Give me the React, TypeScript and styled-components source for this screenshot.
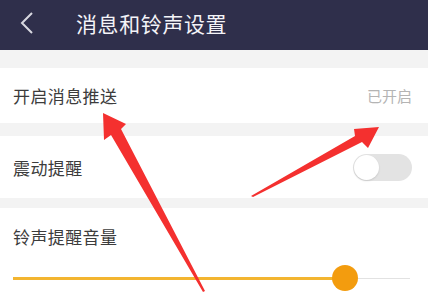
import React from 'react';
import styled, { createGlobalStyle } from 'styled-components';

const GlobalStyle = createGlobalStyle`
    html, body {
        margin: 0;
        padding: 0;
        background: #ffffff;
        font-family: "Noto Sans CJK SC", "Noto Sans", sans-serif;
    }
`;

const Page = styled.div`
    position: relative;
    width: 428px;
    height: 300px;
    overflow: hidden;
    background: #f3f3f3;
    display: flex;
    flex-direction: column;
`;

const Header = styled.div`
    height: 50px;
    flex: 0 0 50px;
    background: #2f2f4b;
    display: flex;
    align-items: center;
    padding: 0 0 4px 20px;
    box-sizing: border-box;
`;

const BackButton = styled.div`
    width: 16px;
    height: 24px;
    display: flex;
    align-items: center;
`;

const Title = styled.div`
    margin-left: 40px;
    color: #f4f4f8;
    font-size: 21px;
    letter-spacing: 0.6px;
`;

const Gap = styled.div<{ $h: number }>`
    flex: 0 0 ${(p) => p.$h}px;
`;

const Row = styled.div<{ $h: number }>`
    flex: 0 0 ${(p) => p.$h}px;
    background: #ffffff;
    display: flex;
    align-items: center;
    justify-content: space-between;
    padding: 0 16px 0 13px;
    box-sizing: border-box;
`;

const Label = styled.div`
    color: #3c3c3c;
    font-size: 17px;
    letter-spacing: 0.4px;
`;

const Status = styled.div`
    color: #b4b4b4;
    font-size: 15px;
`;

const Toggle = styled.div`
    width: 59px;
    height: 27px;
    border-radius: 14px;
    background: #e3e3e3;
    display: flex;
    align-items: center;
    padding: 1px;
    box-sizing: border-box;
`;

const Knob = styled.div`
    width: 25px;
    height: 25px;
    border-radius: 50%;
    background: #ffffff;
    box-shadow: 0 1px 2px rgba(0, 0, 0, 0.12);
`;

const VolumeSection = styled.div`
    flex: 1;
    background: #ffffff;
    padding: 16px 18px 0 13px;
    display: flex;
    flex-direction: column;
`;

const SliderRow = styled.div`
    margin-top: 16px;
    height: 26px;
    display: flex;
    align-items: center;
`;

const Filled = styled.div`
    flex: 0 0 332px;
    height: 3px;
    background: #f3b530;
`;

const Thumb = styled.div`
    flex: 0 0 26px;
    height: 26px;
    border-radius: 50%;
    background: #f39c0e;
    margin: 0 -13px;
    position: relative;
    z-index: 1;
`;

const Rest = styled.div`
    flex: 1;
    height: 1px;
    background: #e2e2e2;
`;

const Annotations = styled.svg`
    position: absolute;
    left: 0;
    top: 0;
    pointer-events: none;
`;

export default function App() {
    return (
        <>
            <GlobalStyle />
            <Page>
                <Header>
                    <BackButton>
                        <svg width="14" height="24" viewBox="0 0 14 24">
                            <path d="M12 2 L2 12 L12 22" fill="none" stroke="#d8d8e0" strokeWidth="2" />
                        </svg>
                    </BackButton>
                    <Title>消息和铃声设置</Title>
                </Header>
                <Gap $h={18} />
                <Row $h={55}>
                    <Label>开启消息推送</Label>
                    <Status>已开启</Status>
                </Row>
                <Gap $h={13} />
                <Row $h={62}>
                    <Label>震动提醒</Label>
                    <Toggle>
                        <Knob />
                    </Toggle>
                </Row>
                <Gap $h={10} />
                <VolumeSection>
                    <Label>铃声提醒音量</Label>
                    <SliderRow>
                        <Filled />
                        <Thumb />
                        <Rest />
                    </SliderRow>
                </VolumeSection>
                <Annotations width="428" height="300" viewBox="0 0 428 300">
                    <polygon
                        points="103,113 126,124 121,129 205,291 203,292 111,135 104,140"
                        fill="#f4302f"
                    />
                    <polygon
                        points="379,127 354,129 355,136 251,196 253,197 362,142 368,148"
                        fill="#f4302f"
                    />
                </Annotations>
            </Page>
        </>
    );
}
